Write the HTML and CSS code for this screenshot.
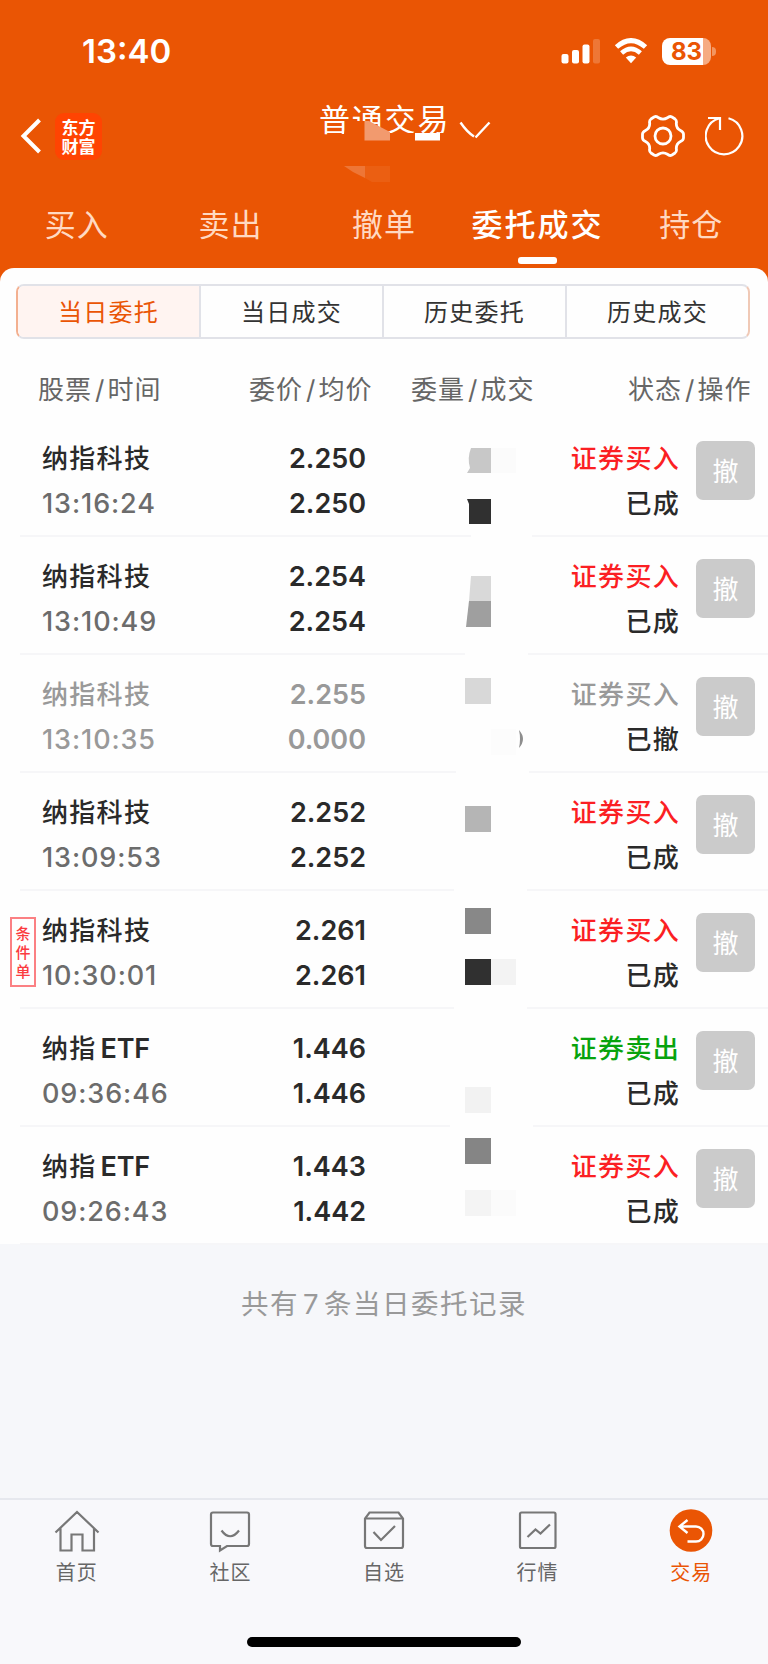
FILE: index.html
```
<!DOCTYPE html>
<html lang="zh-CN">
<head>
  <meta charset="UTF-8" />
  <meta name="viewport" content="width=device-width, initial-scale=1.0"/>
  <title>委托成交</title>
  <link rel="stylesheet" href="styles.css">
</head>
<body>
  <header class="header">
    <div class="status-bar">
      <span class="clock">13:40</span>
      <svg class="signal" width="40" height="26" viewBox="0 0 40 26" fill="#fff">
        <rect x="0.5" y="16" width="7" height="9.5" rx="2"/>
        <rect x="11" y="12" width="7" height="13.5" rx="2"/>
        <rect x="21.5" y="6.5" width="7" height="19" rx="2"/>
        <rect x="32" y="1" width="7" height="24.5" rx="2" opacity=".2"/>
      </svg>
      <svg class="wifi" width="34" height="26" viewBox="0 0 34 26">
        <path d="M2.5 9 Q17 -3.8 31.5 9" fill="none" stroke="#fff" stroke-width="5"/>
        <path d="M7.6 15 Q17 6.8 26.4 15" fill="none" stroke="#fff" stroke-width="4.6"/>
        <path d="M11.8 19.6 Q17 15.2 22.2 19.6 L17 25.2 Z" fill="#fff"/>
      </svg>
      <div class="battery"><span>83</span></div>
    </div>

    <div class="title-bar">
      <svg class="back" width="22" height="36" viewBox="0 0 22 36" fill="none" stroke="#fff" stroke-width="4">
        <path d="M19.5 2 L3.5 18 L19.5 34"/>
      </svg>
      <div class="logo"><span>东方</span><span>财富</span></div>
      <div class="title">
        <span>普通交易</span>
        <svg class="title-mask" width="140" height="92" viewBox="0 0 140 92">
          <path fill="#ea5504" d="M19 51 L21 44 H25 L28 31 H46 L71 43 H140 V92 H0 V51 Z"/>
          <path fill="#f29a6e" d="M45.500 31 H50 L71 42 V50.500 H45.500 Z"/>
          <path fill="#fff" d="M96 43 H121 V50.500 H96 Z"/>
          <path fill="#ee7636" d="M25 76 H46 V88 L34 82 Z"/>
          <path fill="#eb5f12" d="M46 76 H71 V95 H58 L46 88 Z"/>
        </svg>
        <svg class="chevron" width="32" height="18" viewBox="0 0 32 18" fill="none" stroke="#fff" stroke-width="2.4">
          <path d="M1.500 1.500 Q8 11 15 15.500 M16.500 16.500 L30.500 1.500"/>
        </svg>
      </div>
      <svg class="gear" width="44" height="42" viewBox="0 0 44 42" fill="none" stroke="#fff" stroke-width="2.8">
        <path d="M13 2 Q15.500 0.800 17.500 2.800 Q22 5.500 26.500 2.800 Q28.500 0.800 31 2 L34 4 Q36 5.500 35.300 8.500 Q35.300 13.500 39.500 15.500 Q42.600 17 42.500 19.500 V22.500 Q42.600 25 39.500 26.500 Q35.300 28.500 35.300 33.500 Q36 36.500 34 38 L31 40 Q28.500 41.200 26.500 39.200 Q22 36.500 17.500 39.200 Q15.500 41.200 13 40 L10 38 Q8 36.500 8.700 33.500 Q8.700 28.500 4.500 26.500 Q1.400 25 1.500 22.500 V19.500 Q1.400 17 4.500 15.500 Q8.700 13.500 8.700 8.500 Q8 5.500 10 4 Z"/>
        <circle cx="22" cy="21" r="8"/>
      </svg>
      <svg class="refresh" width="40" height="40" viewBox="0 0 40 40" fill="none" stroke="#fff" stroke-width="2.200">
        <path d="M23.500 2.300 A18.300 18.300 0 1 1 14.500 2.300 M3 2 H15 V14"/>
      </svg>
    </div>

    <nav class="tabs">
      <a>买入</a>
      <a>卖出</a>
      <a>撤单</a>
      <a class="active">委托成交</a>
      <a>持仓</a>
    </nav>
  </header>

  <main class="card">
    <div class="segment">
      <button class="on">当日委托</button>
      <button>当日成交</button>
      <button>历史委托</button>
      <button>历史成交</button>
    </div>

    <div class="list-head">
      <span>股票<i>/</i>时间</span>
      <span>委价<i>/</i>均价</span>
      <span>委量<i>/</i>成交</span>
      <span>状态<i>/</i>操作</span>
    </div>

    <div class="order">
      <div class="stock"><b>纳指科技</b><time>13:16:24</time></div>
      <div class="price"><span>2.250</span><span>2.250</span></div>
      <svg class="qty" width="76" height="118" viewBox="0 0 76 118">
        <path fill="#c8c8c8" d="M7 30 H27 V55 H3 L6 50 Q3 40 7 30 Z"/>
        <path fill="#fbfbfb" d="M27 30 H52 V55 H27 Z"/>
        <path fill="#303030" d="M3 81 H27 V106 H5 V86 Z"/>
        <path fill="#fefefe" d="M7 116 H68 V119 H7 Z"/>
      </svg>
      <div class="state buy"><b>证券买入</b><span>已成</span></div>
      <button class="cancel">撤</button>
    </div>

    <div class="order">
      <div class="stock"><b>纳指科技</b><time>13:10:49</time></div>
      <div class="price"><span>2.254</span><span>2.254</span></div>
      <svg class="qty" width="76" height="118" viewBox="0 0 76 118">
        <path fill="#d9d9d9" d="M7 40 H27 V65 H5 Z"/>
        <path fill="#9f9f9f" d="M5 65 H27 V91 H2 Z"/>
        <path fill="#fefefe" d="M1 116 H64 V119 H1 Z"/>
      </svg>
      <div class="state buy"><b>证券买入</b><span>已成</span></div>
      <button class="cancel">撤</button>
    </div>

    <div class="order revoked">
      <div class="stock"><b>纳指科技</b><time>13:10:35</time></div>
      <div class="price"><span>2.255</span><span>0.000</span></div>
      <svg class="qty" width="76" height="118" viewBox="0 0 76 118">
        <path fill="#d8d8d8" d="M1 24 H27 V50 H1 Z"/>
        <path fill="#fcfcfc" d="M27 75 H52 V101 H27 Z"/>
        <path fill="#8e8e8e" d="M55 76 Q63 85 55 94 Q57 85 55 76 Z"/>
        <path fill="#fefefe" d="M-8 116 H65 V119 H-8 Z"/>
      </svg>
      <div class="state"><b>证券买入</b><span>已撤</span></div>
      <button class="cancel">撤</button>
    </div>

    <div class="order">
      <div class="stock"><b>纳指科技</b><time>13:09:53</time></div>
      <div class="price"><span>2.252</span><span>2.252</span></div>
      <svg class="qty" width="76" height="118" viewBox="0 0 76 118">
        <path fill="#b5b5b5" d="M1 34 H27 V60 H1 Z"/>
        <path fill="#fefefe" d="M-10 116 H63 V119 H-10 Z"/>
      </svg>
      <div class="state buy"><b>证券买入</b><span>已成</span></div>
      <button class="cancel">撤</button>
    </div>

    <div class="order">
      <em class="tag">条<br>件<br>单</em>
      <div class="stock"><b>纳指科技</b><time>10:30:01</time></div>
      <div class="price"><span>2.261</span><span>2.261</span></div>
      <svg class="qty" width="76" height="118" viewBox="0 0 76 118">
        <path fill="#888" d="M1 18 H27 V44 H1 Z"/>
        <path fill="#303030" d="M1 69 H27 V95 H1 Z"/>
        <path fill="#f3f3f3" d="M27 69 H52 V95 H27 Z"/>
        <path fill="#fefefe" d="M-10 116 H63 V119 H-10 Z"/>
      </svg>
      <div class="state buy"><b>证券买入</b><span>已成</span></div>
      <button class="cancel">撤</button>
    </div>

    <div class="order">
      <div class="stock"><b>纳指<i>ETF</i></b><time>09:36:46</time></div>
      <div class="price"><span>1.446</span><span>1.446</span></div>
      <svg class="qty" width="76" height="118" viewBox="0 0 76 118">
        <path fill="#f2f2f2" d="M1 79 H27 V105 H1 Z"/>
        <path fill="#fefefe" d="M-14 116 H69 V119 H-14 Z"/>
      </svg>
      <div class="state sell"><b>证券卖出</b><span>已成</span></div>
      <button class="cancel">撤</button>
    </div>

    <div class="order">
      <div class="stock"><b>纳指<i>ETF</i></b><time>09:26:43</time></div>
      <div class="price"><span>1.443</span><span>1.442</span></div>
      <svg class="qty" width="76" height="118" viewBox="0 0 76 118">
        <path fill="#858585" d="M1 12 H27 V38 H1 Z"/>
        <path fill="#f4f4f4" d="M1 64 H27 V90 H1 Z"/>
        <path fill="#fbfbfb" d="M27 64 H52 V90 H27 Z"/>
      </svg>
      <div class="state buy"><b>证券买入</b><span>已成</span></div>
      <button class="cancel">撤</button>
    </div>
  </main>

  <p class="summary">共有<i>7</i>条当日委托记录</p>

  <footer class="tabbar">
    <a>
      <svg width="46" height="44" viewBox="0 0 46 44">
        <path d="M1.500 23.500 L23 3 L44.500 23.500 M6.500 19.500 V41.500 H17.500 V25.500 H28.500 V41.500 H40 V19.500"/>
      </svg>
      首页
    </a>
    <a>
      <svg width="46" height="44" viewBox="0 0 46 44">
        <path d="M6 3.500 H40 Q42 3.500 42 5.500 V35 Q42 37 40 37 H20 L13 41.500 V37 H6 Q4 37 4 35 V5.500 Q4 3.500 6 3.500 Z M14.500 21.500 Q23 33 32 21.500"/>
      </svg>
      社区
    </a>
    <a>
      <svg width="46" height="44" viewBox="0 0 46 44">
        <path d="M8.500 3.500 H37.500 L42 9.500 V37 Q42 39 40 39 H6 Q4 39 4 37 V9.500 Z M4 9.500 H42 M12.500 23 L20 31 L34 17"/>
      </svg>
      自选
    </a>
    <a>
      <svg width="46" height="44" viewBox="0 0 46 44">
        <rect x="5" y="3.500" width="35.500" height="35.500" rx="1.500"/>
        <path d="M12.500 28 L20.500 20.500 L25.500 24.500 L35 15.500"/>
      </svg>
      行情
    </a>
    <a class="active">
      <svg width="46" height="44" viewBox="0 0 46 44">
        <circle cx="23" cy="21.500" r="21.300"/>
        <path d="M19.500 11 L11.500 17.500 L19.500 24 M11.500 17.500 H28 A7.500 7.500 0 0 1 28 32.500 H19.500"/>
      </svg>
      交易
    </a>
  </footer>
  <div class="home-indicator"></div>
</body>
</html>
```

FILE: styles.css
```
* {
  box-sizing: border-box;
}
body {
  margin: 0;
  width: 768px;
  height: 1664px;
  display: flex;
  flex-direction: column;
  font-family: Inter, "Noto Sans CJK SC", sans-serif;
  background-color: #f6f7fa;
  color: #2a2a2a;
  overflow: hidden;
}
i, em {
  font-style: normal;
}
button {
  font-family: inherit;
  border: none;
  padding: 0;
  background: none;
}
.header {
  height: 288px;
  background-color: #ea5504;
  color: #fff;
}

/* status bar */
.status-bar {
  display: flex;
  align-items: center;
  height: 102px;
  padding: 0 52px 0 82px;
}
.clock {
  font-size: 33px;
  font-weight: 600;
  flex: 1;
}
.wifi {
  margin-left: 13px;
}
.battery {
  position: relative;
  width: 49px;
  height: 27px;
  margin: 0 5px 0 14px;
  border-radius: 8px;
  background: linear-gradient(to right, #fff 41px, #f6ab82 41px);
  color: #ea5504;
  font-size: 24px;
  font-weight: 700;
  line-height: 27px;
  text-align: center;
}
.battery::after {
  content: "";
  position: absolute;
  right: -5px;
  top: 9px;
  width: 4px;
  height: 9px;
  border-radius: 0 4px 4px 0;
  background-color: #f3955f;
}

/* title bar */
.title-bar {
  display: flex;
  align-items: center;
  height: 68px;
  padding: 0 48px 0 20px;
}
.logo {
  display: flex;
  flex-direction: column;
  width: 47px;
  height: 47px;
  margin-left: 13px;
  padding-top: 4px;
  border-radius: 9px;
  background-color: #ff4402;
  font-family: "Noto Sans CJK SC", sans-serif;
  font-size: 17px;
  font-weight: 700;
  line-height: 19px;
  text-align: center;
}
.title {
  position: relative;
  display: flex;
  align-items: center;
  gap: 10px;
  margin: 0 auto 0 217px;
  height: 68px;
  padding-bottom: 37px;
  font-size: 31px;
  letter-spacing: 1.8px;
}
.title-mask {
  position: absolute;
  left: 0;
  top: -12px;
}
.chevron {
  position: relative;
  top: 12px;
  margin-left: -1px;
}
.refresh {
  margin-left: 20px;
  margin-right: -25px;
}

/* main tabs */
.tabs {
  display: grid;
  grid-template-columns: repeat(5, 1fr);
  height: 97px;
}
.tabs a {
  position: relative;
  padding-top: 32px;
  font-size: 31px;
  line-height: 46px;
  letter-spacing: 1px;
  text-align: center;
  color: #ffd9c2;
}
.tabs .active {
  font-weight: 500;
  letter-spacing: 2px;
  color: #fff;
}
.tabs .active::after {
  content: "";
  position: absolute;
  left: 57px;
  top: 87px;
  width: 39px;
  height: 6.5px;
  border-radius: 3px;
  background-color: #fff;
}

/* order list */
.card {
  position: relative;
  margin-top: -20px;
  padding-top: 16px;
  height: 976px;
  border-radius: 14px 14px 0 0;
  background-color: #fefefe;
}
.segment {
  display: grid;
  grid-template-columns: 181px 183px 183px 1fr;
  height: 55px;
  margin: 0 18px 0 16px;
  border: 2px solid #e1e2e8;
  border-left-color: #f3b090;
  border-right-color: #f0c9b6;
  border-radius: 8px;
  overflow: hidden;
}
.segment button {
  padding-bottom: 2px;
  font-size: 24px;
  letter-spacing: 1.2px;
  color: #333;
}
.segment button + button {
  border-left: 2px solid #e1e2e8;
}
.segment .on {
  color: #ea5504;
  background-color: #fff4f1;
}
.list-head {
  display: grid;
  grid-template-columns: 211px 162px 217px 1fr;
  height: 80px;
  padding: 33px 17px 0 38px;
  font-size: 26px;
  line-height: 36px;
  letter-spacing: 1px;
  color: #666;
  white-space: nowrap;
}
.list-head i {
  margin: 0 2px 0 3px;
}
.order {
  position: relative;
  display: flex;
  height: 118px;
  padding: 17px 13px 0 42px;
  font-size: 26px;
  line-height: 45px;
}
.order::after {
  content: "";
  position: absolute;
  left: 20px;
  right: 0;
  bottom: 0;
  height: 2px;
  background-color: #f6f6f8;
}
.order b {
  font-weight: 500;
  letter-spacing: 1.3px;
}
.stock,
.price,
.state {
  display: flex;
  flex-direction: column;
}
.stock {
  width: 200px;
}
.stock i {
  margin-left: 4px;
  font-size: 27px;
  font-weight: 600;
  letter-spacing: -0.3px;
}
.stock time {
  font-size: 27px;
  font-weight: 500;
  letter-spacing: 0.9px;
  color: #6c6c6c;
}
.price {
  width: 124px;
  text-align: right;
  font-size: 27px;
  font-weight: 600;
}
.qty {
  position: relative;
  z-index: 1;
  margin: -18px 0 0 98px;
  overflow: visible;
}
.state {
  width: 140px;
  text-align: right;
  font-weight: 500;
}
.state span {
  letter-spacing: 1.2px;
}
.buy b {
  color: #fb1f23;
}
.sell b {
  color: #08a30c;
}
.revoked .stock,
.revoked .stock time,
.revoked .price,
.revoked .state b {
  color: #999;
}
.cancel {
  width: 59px;
  height: 59px;
  margin: 5px 0 0 16px;
  padding-bottom: 2px;
  border-radius: 7px;
  background-color: #cbcbcb;
  color: #fff;
  font-size: 26px;
}
.tag {
  position: absolute;
  left: 10px;
  top: 26px;
  width: 26px;
  height: 70px;
  padding-top: 5px;
  border: 2px solid #fb8083;
  color: #fb3b40;
  font-size: 15px;
  font-weight: 500;
  line-height: 19px;
  text-align: center;
}

.summary {
  flex: 1;
  margin: 0;
  padding-top: 39px;
  text-align: center;
  font-size: 27.5px;
  line-height: 42px;
  letter-spacing: 1.5px;
  color: #999;
}
.summary i {
  margin: 0 4px;
}

/* bottom bar */
.tabbar {
  display: grid;
  grid-template-columns: repeat(5, 1fr);
  height: 139px;
  padding-top: 9px;
  border-top: 2px solid #e6e8ee;
  background-color: #f8f8fb;
}
.tabbar a {
  display: flex;
  flex-direction: column;
  align-items: center;
  font-size: 20px;
  line-height: 40px;
  letter-spacing: 1px;
  color: #666;
}
.tabbar svg {
  fill: none;
  stroke: #777;
  stroke-width: 2.2;
}
.tabbar .active {
  color: #ea5504;
}
.active circle {
  fill: #ea5504;
  stroke: none;
}
.active path {
  stroke: #fff;
  stroke-width: 2.4;
}
.home-indicator {
  height: 27px;
  background-color: #f8f8fb;
}
.home-indicator::before {
  content: "";
  display: block;
  width: 274px;
  height: 10px;
  margin: 0 auto;
  border-radius: 5px;
  background-color: #000;
}
```
